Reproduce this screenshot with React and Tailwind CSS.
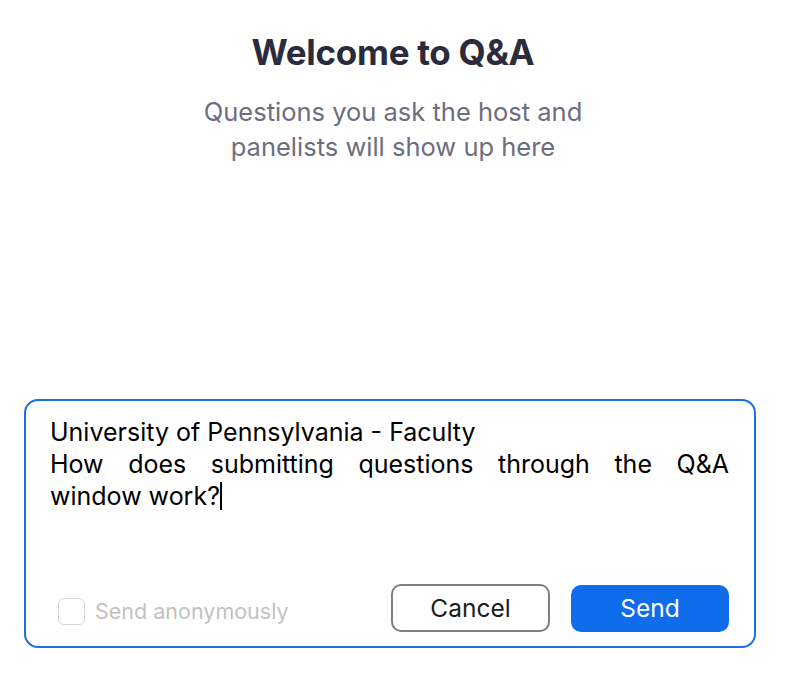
import React, { useState } from 'react';

const App = () => {
  const [anon, setAnon] = useState(false);

  return (
    <div
      className="w-[786px] h-[678px] bg-white flex flex-col"
      style={{ fontFamily: 'Inter, "Liberation Sans", sans-serif' }}
    >
      {/* Header */}
      <div className="flex flex-col items-center pt-[30px]">
        <h1 className="text-[35px] leading-[44px] font-bold text-[#2c2b3d] tracking-[-0.3px]">
          Welcome to Q&amp;A
        </h1>
        <p className="mt-[20px] text-center text-[25.5px] leading-[35px] text-[#6e6d7e]">
          Questions you ask the host and
          <br />
          panelists will show up here
        </p>
      </div>

      <div className="flex-1" />

      {/* Composer */}
      <div className="ml-[24px] mr-[30px] mb-[30px] h-[249px] rounded-[14px] border-2 border-[#1b6fe4] flex flex-col">
        <div className="pl-[24px] pr-[25px] pt-[15px] flex-1 text-[25px] leading-[32px] text-black">
          <p>University of Pennsylvania - Faculty</p>
          <p className="text-justify [text-align-last:justify]">
            How does submitting questions through the Q&amp;A
          </p>
          <p>
            window work?
            <span className="inline-block w-[2px] h-[28px] bg-black align-[-5px]" />
          </p>
        </div>
        <div className="flex items-center pl-[32px] pr-[25px] pb-[14px]">
          <button
            className="flex items-center gap-[10px] mt-[6px]"
            onClick={() => setAnon(!anon)}
          >
            <span className="w-[27px] h-[27px] rounded-[6px] border border-[#d6d6d6] bg-white" />
            <span className="text-[21.5px] text-[#c2c2c2]">Send anonymously</span>
          </button>
          <div className="flex-1" />
          <button className="w-[159px] h-[48px] rounded-[10px] border-2 border-[#7f7f83] text-[24.5px] text-[#1c1c1c] bg-white">
            Cancel
          </button>
          <button className="ml-[21px] w-[158px] h-[47px] rounded-[10px] bg-[#0f6ceb] text-[24.5px] text-white">
            Send
          </button>
        </div>
      </div>
    </div>
  );
};

export default App;
